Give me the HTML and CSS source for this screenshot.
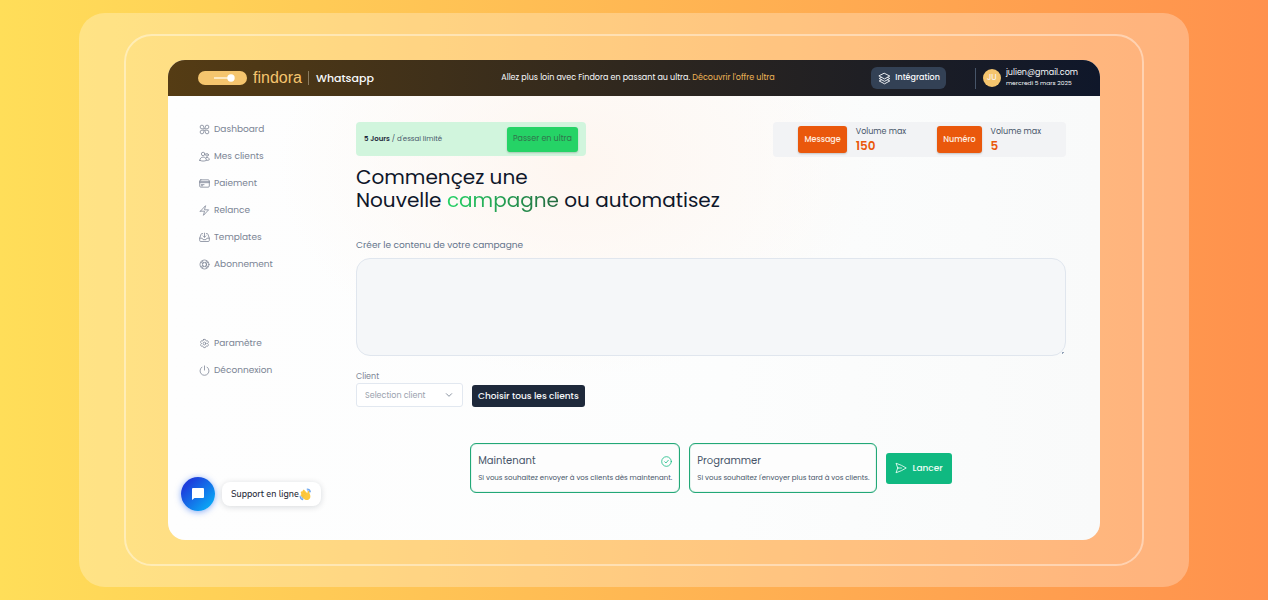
FILE: index.html
```html
<!DOCTYPE html>
<html lang="fr">
<head>
<meta charset="utf-8">
<meta name="viewport" content="width=device-width, initial-scale=1">
<title>Findora | Whatsapp</title>
<link rel="stylesheet" href="styles.css">
</head>
<body>
<div class="frame">
<div class="ring">
<div class="app">
  <header class="topbar">
    <div class="brand">
      <svg class="brand-mark" viewBox="0 0 49 14" aria-hidden="true">
        <rect width="49" height="14" rx="7" fill="#f5c56e"/>
        <path d="M16 7h16" stroke="#fff3dc" stroke-width="1.500"/>
        <circle cx="33" cy="7" r="3.700" fill="#fff"/>
      </svg>
      <span class="brand-name">findora</span>
      <span class="brand-product">Whatsapp</span>
    </div>
    <p class="promo">Allez plus loin avec Findora en passant au ultra. <a href="#">Découvrir l'offre ultra</a></p>
    <div class="account">
      <button class="integration" type="button">
        <svg class="line-icon" viewBox="0 0 24 24" aria-hidden="true"><path d="M12 2.500 21.800 7.500 12 12.800 2.200 7.500ZM6.400 9.800 2.200 12 12 17.200 21.800 12l-4.200-2.200M6.400 14.300 2.200 16.500 12 21.800l9.800-5.300-4.200-2.200"/></svg>
        Intégration
      </button>
      <div class="user">
        <span class="avatar">JU</span>
        <div class="user-text">
          <span class="user-mail">julien@gmail.com</span>
          <span class="user-date">mercredi 5 mars 2025</span>
        </div>
      </div>
    </div>
  </header>

  <div class="body">
    <nav class="sidebar">
      <ul class="menu">
        <li><a href="#"><svg class="line-icon" viewBox="0 0 24 24"><path d="M10.500 10.500H6.500a4 4 0 1 1 4-4ZM13.500 10.500h4a4 4 0 1 0-4-4ZM10.500 13.500H6.500a4 4 0 1 0 4 4ZM13.500 13.500h4a4 4 0 1 1-4 4Z"/></svg>Dashboard</a></li>
        <li><a href="#"><svg class="line-icon" viewBox="0 0 24 24"><circle cx="9" cy="6.500" r="3.800"/><circle cx="17.600" cy="8.500" r="2.900"/><path d="M1.800 20.500c0-4.500 3-7.200 7.200-7.200s7.200 2.700 7.200 7.200c-4.500 2-10 2-14.400 0ZM15.500 14.200c3.600-1.200 6.900.8 6.900 5.100-1.500.9-3.300 1.200-5.200 1.100"/></svg>Mes clients</a></li>
        <li><a href="#"><svg class="line-icon" viewBox="0 0 24 24"><rect x="1.500" y="4" width="21" height="16" rx="2.500"/><path d="M1.500 8h21M1.500 10.200h21M5 14.500h6M5 17h3"/></svg>Paiement</a></li>
        <li><a href="#"><svg class="line-icon" viewBox="0 0 24 24"><path d="m3 13.500 11.250-12L12 10.500h9L9.750 22.500 12 13.500H3Z"/></svg>Relance</a></li>
        <li><a href="#"><svg class="line-icon" viewBox="0 0 24 24"><path d="M8 3.500H6.500a2.200 2.200 0 0 0-2.100 1.600L1.500 13.500v5a2.200 2.200 0 0 0 2.200 2.200h16.600a2.200 2.200 0 0 0 2.200-2.200v-5l-2.900-8.400a2.200 2.200 0 0 0-2.100-1.600H16M1.500 13.500h5.300l2 3.200h6.400l2-3.200h5.300M12 2.500v9m-3-3 3 3 3-3"/></svg>Templates</a></li>
        <li><a href="#"><svg class="line-icon" viewBox="0 0 24 24"><circle cx="12" cy="12" r="9.800"/><circle cx="12" cy="12" r="4.500"/><path d="M9.500 8.200 7.200 4M14.500 8.200 16.800 4M8.200 9.500 4 7.200M8.200 14.500 4 16.800M15.800 9.500 20 7.200M15.800 14.500 20 16.800M9.500 15.800 7.200 20M14.500 15.800 16.800 20"/></svg>Abonnement</a></li>
      </ul>
      <ul class="menu">
        <li><a href="#"><svg class="line-icon" viewBox="0 0 24 24"><path d="M9.594 3.940c.09-.542.56-.94 1.110-.94h2.593c.55 0 1.020.398 1.110.94l.213 1.281c.063.374.313.686.645.87.074.04.147.083.22.127.325.196.72.257 1.075.124l1.217-.456a1.125 1.125 0 0 1 1.370.49l1.296 2.247a1.125 1.125 0 0 1-.26 1.431l-1.003.827c-.293.241-.438.613-.43.992a7.723 7.723 0 0 1 0 .255c-.008.378.137.75.43.991l1.004.827c.424.35.534.955.26 1.430l-1.298 2.247a1.125 1.125 0 0 1-1.369.491l-1.217-.456c-.355-.133-.75-.072-1.076.124a6.470 6.470 0 0 1-.22.128c-.331.183-.581.495-.644.869l-.213 1.281c-.09.543-.56.94-1.110.94h-2.594c-.55 0-1.019-.398-1.110-.94l-.213-1.281c-.062-.374-.312-.686-.644-.87a6.520 6.520 0 0 1-.22-.127c-.325-.196-.72-.257-1.076-.124l-1.217.456a1.125 1.125 0 0 1-1.369-.49l-1.297-2.247a1.125 1.125 0 0 1 .26-1.431l1.004-.827c.292-.24.437-.613.43-.991a6.932 6.932 0 0 1 0-.255c.007-.38-.138-.751-.43-.992l-1.004-.827a1.125 1.125 0 0 1-.26-1.430l1.297-2.247a1.125 1.125 0 0 1 1.370-.491l1.216.456c.356.133.751.072 1.076-.124.072-.044.146-.086.22-.128.332-.183.582-.495.644-.869l.214-1.280Z"/><circle cx="12" cy="12" r="3"/></svg>Paramètre</a></li>
        <li><a href="#"><svg class="line-icon" viewBox="0 0 24 24"><path d="M6.500 4.500a9.800 9.800 0 1 0 11 0M12 2v9"/></svg>Déconnexion</a></li>
      </ul>
    </nav>

    <main class="content">
      <div class="status">
        <div class="trial">
          <span><strong>5 Jours</strong> / d'essai limité</span>
          <button class="upgrade" type="button">Passer en ultra</button>
        </div>
        <dl class="quotas">
          <div class="quota"><dt>Message</dt><dd>Volume max<b>150</b></dd></div>
          <div class="quota"><dt>Numéro</dt><dd>Volume max<b>5</b></dd></div>
        </dl>
      </div>

      <h1>Commençez une<br>Nouvelle <em>campagne</em> ou automatisez</h1>

      <form class="campaign">
        <label class="message-label" for="message">Créer le contenu de votre campagne</label>
        <textarea id="message"></textarea>

        <div class="clients">
          <div class="field">
            <label for="client">Client</label>
            <div class="select-box">
              <select id="client"><option>Selection client</option></select>
              <svg class="line-icon chevron" viewBox="0 0 24 24" aria-hidden="true"><path d="m4 8 8 8 8-8"/></svg>
            </div>
          </div>
          <button class="choose-all" type="button">Choisir tous les clients</button>
        </div>

        <div class="launch">
          <label class="mode">
            <input type="radio" name="mode" checked>
            <span class="mode-title">Maintenant</span>
            <svg class="line-icon mode-check" viewBox="0 0 24 24" aria-hidden="true"><circle cx="12" cy="12" r="10.500"/><path d="m8 12.500 2.800 2.800 5.200-6"/></svg>
            <span class="mode-text">Si vous souhaitez envoyer à vos clients dès maintenant.</span>
          </label>
          <label class="mode">
            <input type="radio" name="mode">
            <span class="mode-title">Programmer</span>
            <svg class="line-icon mode-check" viewBox="0 0 24 24" aria-hidden="true"><circle cx="12" cy="12" r="10.500"/><path d="m8 12.500 2.800 2.800 5.200-6"/></svg>
            <span class="mode-text">Si vous souhaitez l'envoyer plus tard à vos clients.</span>
          </label>
          <button class="send" type="submit">
            <svg class="line-icon" viewBox="0 0 24 24" aria-hidden="true"><path d="M5.500 12 2 2.500C9.500 4.700 16.200 8 22.500 12 16.200 16 9.500 19.300 2 21.500L5.500 12Zm0 0H13"/></svg>
            Lancer
          </button>
        </div>
      </form>
    </main>
  </div>

  <div class="support">
    <button class="support-chat" type="button" aria-label="Ouvrir le chat">
      <svg viewBox="0 0 12 12" aria-hidden="true"><path d="M1 0h10a1 1 0 0 1 1 1v8a1 1 0 0 1-1 1H2.500L0 12V1a1 1 0 0 1 1-1Z" fill="#fff"/></svg>
    </button>
    <span class="support-label">Support en ligne
      <svg class="wave" viewBox="0 0 24 24" aria-hidden="true">
        <path d="M15 2c3 0 5.500 2.300 6 5M16 5c1.500.3 2.600 1.300 3 2.500M2 15c.2 3.500 2 5.800 5 6.500M5 16c.3 1.600 1.200 2.600 2.600 3" fill="none" stroke="#6fa8ee" stroke-width="2" stroke-linecap="round"/>
        <path d="M4.500 6.500c1-1 2-.7 2.900.1l-.5-1.300c-.3-1.700 1.800-2.600 2.900-1.400l5.500 5.800c.5-1.600.2-3.300 1.500-4 1.200-.5 2 .5 2 1.700 0 2.800 2.700 5.300 2.200 9.100-.5 4-4.500 6.500-8.200 5.700-2-.4-3.500-1.700-5-3.200l-4.300-4.500c-1.100-1.300.1-2.900 1.300-2.400L3.600 9c-.8-.9-.1-2.200.9-2.500Z" fill="#fdc93f"/>
        <path d="m7.500 6.700 4.800 5M5 9.500l5 5M5 12.500l3.500 3.700" stroke="#f3b632" stroke-width="1" stroke-linecap="round"/>
      </svg>
    </span>
  </div>
</div>
</div>
</div>
</body>
</html>
```

FILE: styles.css
```css
* { box-sizing: border-box; }

body {
  margin: 0;
  min-height: 100vh;
  display: flex;
  padding: 13px 79px;
  background: linear-gradient(90deg, #ffde59, #ff914d);
  font-family: Poppins, Inter, "Noto Sans", sans-serif;
  font-size: 9px;
  color: #475569;
}

button, select, textarea { font: inherit; }
button { border: 0; cursor: pointer; white-space: nowrap; }
a { color: inherit; text-decoration: none; }

.line-icon {
  width: 11px;
  height: 11px;
  flex: none;
  fill: none;
  stroke: currentColor;
  stroke-width: 1.7;
  stroke-linecap: round;
  stroke-linejoin: round;
}

.frame {
  flex: 1;
  display: flex;
  padding: 21px 45px;
  border-radius: 26px;
  background: rgba(255, 255, 255, .27);
}

.ring {
  flex: 1;
  display: flex;
  padding: 24px 42px;
  border: 2px solid rgba(255, 255, 255, .4);
  border-radius: 28px;
}

.app {
  position: relative;
  flex: 1;
  min-width: 0;
  display: flex;
  flex-direction: column;
  overflow: hidden;
  border-radius: 17px;
  background:
    radial-gradient(ellipse 300px 210px at 44% 22%, #fef6f0, rgba(254, 250, 246, 0)),
    linear-gradient(90deg, #fefefe, #fcfdfd 60%, #f9fafa);
}

.topbar {
  display: grid;
  grid-template-columns: 1fr auto 1fr;
  align-items: center;
  height: 36px;
  padding: 0 22px 0 30px;
  background: linear-gradient(90deg, #553c14, #292420 58%, #0f172a);
  color: #f8fafc;
}

.brand { display: flex; align-items: center; gap: 6px; }
.brand-mark { width: 49px; height: 14px; }
.brand-name {
  font-family: "Liberation Sans", Arial, sans-serif;
  font-size: 16px;
  color: #f5c56e;
}
.brand-product {
  padding-left: 7px;
  border-left: 1px solid #8a7a5f;
  font-size: 11px;
  line-height: 14px;
  font-weight: 500;
}

.promo { margin: 0; font-size: 8px; }
.promo a { color: #f0b658; }

.account { display: flex; justify-content: flex-end; align-items: center; gap: 29px; }
.integration {
  display: flex;
  align-items: center;
  gap: 4px;
  height: 22px;
  padding: 0 6px 0 7px;
  border-radius: 6px;
  background: #334155;
  color: #f8fafc;
  font-size: 8px;
  font-weight: 500;
}
.integration .line-icon { width: 13px; height: 13px; }
.user {
  display: flex;
  align-items: center;
  gap: 5px;
  height: 21px;
  padding-left: 7px;
  border-left: 1px solid #475569;
}
.avatar {
  width: 18px;
  height: 18px;
  border-radius: 50%;
  background: #f5c56e;
  font-size: 8px;
  line-height: 18px;
  text-align: center;
}
.user-text { display: flex; flex-direction: column; line-height: 10px; white-space: nowrap; }
.user-mail { font-size: 8px; }
.user-date { font-size: 6px; }

.body { flex: 1; display: grid; grid-template-columns: 157px 1fr; padding: 26px 34px 26px 31px; }

.menu { margin: 0 0 65px; padding: 0; list-style: none; }
.menu a {
  display: flex;
  align-items: center;
  gap: 4px;
  height: 14px;
  margin-bottom: 13px;
  font-size: 9px;
  color: #7b8494;
}

.status { display: flex; justify-content: space-between; align-items: flex-start; }
.trial {
  display: flex;
  justify-content: space-between;
  align-items: center;
  width: 230px;
  height: 34px;
  padding: 0 8px;
  border-radius: 4px;
  background: #d1f5dd;
  font-size: 7px;
}
.trial strong { color: #1e293b; font-weight: 600; }
.upgrade {
  height: 25px;
  padding: 0 6px;
  border-radius: 3px;
  background: #25d366;
  box-shadow: 0 1px 2px rgba(0, 0, 0, .2);
  color: #31734c;
  font-size: 8px;
}
.quotas {
  display: flex;
  justify-content: flex-end;
  gap: 31px;
  margin: 0;
  padding: 4px 25px;
  border-radius: 4px;
  background: #f2f3f5;
}
.quota { display: flex; align-items: center; gap: 9px; }
.quota dt {
  padding: 0 6px;
  border-radius: 3px;
  background: #ea580c;
  box-shadow: 0 1px 2px rgba(0, 0, 0, .2);
  color: #ffefe2;
  font-size: 8px;
  line-height: 27px;
  font-weight: 500;
}
.quota dd {
  display: flex;
  flex-direction: column;
  margin: 0;
  font-size: 8px;
  line-height: 12px;
  white-space: nowrap;
}
.quota b { color: #ea580c; font-size: 12px; line-height: 15px; font-weight: 600; }

h1 { margin: 9px 0 0; color: #0f172a; font-size: 20px; line-height: 23px; font-weight: 400; }
h1 em {
  font-style: normal;
  background: linear-gradient(90deg, #25d366, #24693f);
  background-clip: text;
  -webkit-background-clip: text;
  color: transparent;
}

.campaign { margin-top: 26px; }
.message-label { display: block; line-height: 14px; color: #64748b; }
textarea {
  display: block;
  width: 100%;
  height: 98px;
  margin-top: 6px;
  padding: 10px;
  border: 1px solid #e0e6ee;
  border-radius: 14px;
  background: #f5f7f9;
}
textarea::-webkit-resizer {
  background: radial-gradient(circle at 85% 85%, #94a3b8 1px, transparent 1px);
}

.clients { display: flex; align-items: flex-end; gap: 9px; margin-top: 14px; }
.field label { display: block; font-size: 8px; line-height: 13px; color: #7b8494; }
.select-box { position: relative; width: 107px; }
.select-box select {
  display: block;
  width: 100%;
  height: 24px;
  padding: 0 8px;
  border: 1px solid #e2e8f0;
  border-radius: 3px;
  background: #fff;
  color: #9aa2ae;
  font-size: 8px;
  appearance: none;
}
.chevron {
  position: absolute;
  top: 8px;
  right: 10px;
  width: 8px;
  height: 8px;
  color: #8a93a1;
  stroke-width: 3;
  pointer-events: none;
}
.choose-all {
  height: 22px;
  padding: 0 6px;
  border-radius: 3px;
  background: #1e293b;
  color: #f8fafc;
  font-weight: 500;
}

.launch { display: flex; justify-content: center; align-items: center; gap: 9px; margin-top: 36px; }
.mode {
  display: grid;
  grid-template-columns: 1fr auto;
  align-items: center;
  row-gap: 3px;
  padding: 9px 7px;
  border: 1px solid #22a877;
  border-radius: 6px;
  box-shadow: inset 0 0 1px #22a877;
  background: #fdfdfd;
  cursor: pointer;
}
.mode input { position: absolute; opacity: 0; pointer-events: none; }
.mode-title { font-size: 10px; line-height: 16px; }
.mode-check { color: #10b981; visibility: hidden; }
.mode input:checked ~ .mode-check { visibility: visible; }
.mode-text { grid-column: 1 / -1; font-size: 7px; line-height: 11px; white-space: nowrap; }
.send {
  display: flex;
  align-items: center;
  gap: 5px;
  height: 31px;
  padding: 0 9px;
  border-radius: 3px;
  background: #10b981;
  color: #ecfdf5;
  font-weight: 500;
}
.send .line-icon { width: 12px; height: 12px; }

.support {
  position: absolute;
  left: 13px;
  bottom: 29px;
  display: flex;
  align-items: center;
  gap: 7px;
}
.support-chat {
  display: grid;
  place-items: center;
  width: 34px;
  height: 34px;
  padding: 0;
  border-radius: 50%;
  background: linear-gradient(135deg, #1d3fdc 20%, #0aa5f5 85%);
  box-shadow: 0 1px 6px rgba(20, 90, 240, .5);
}
.support-chat svg { width: 12px; height: 12px; }
.support-label {
  display: flex;
  align-items: center;
  height: 24px;
  padding: 0 9px;
  border-radius: 8px;
  background: #fff;
  box-shadow: 0 1px 6px rgba(15, 23, 42, .16);
  color: #1f2937;
  font-family: Nunito, "Open Sans", "Noto Sans", sans-serif;
  font-size: 9px;
  font-weight: 500;
}
.wave { width: 13px; height: 13px; }
```
